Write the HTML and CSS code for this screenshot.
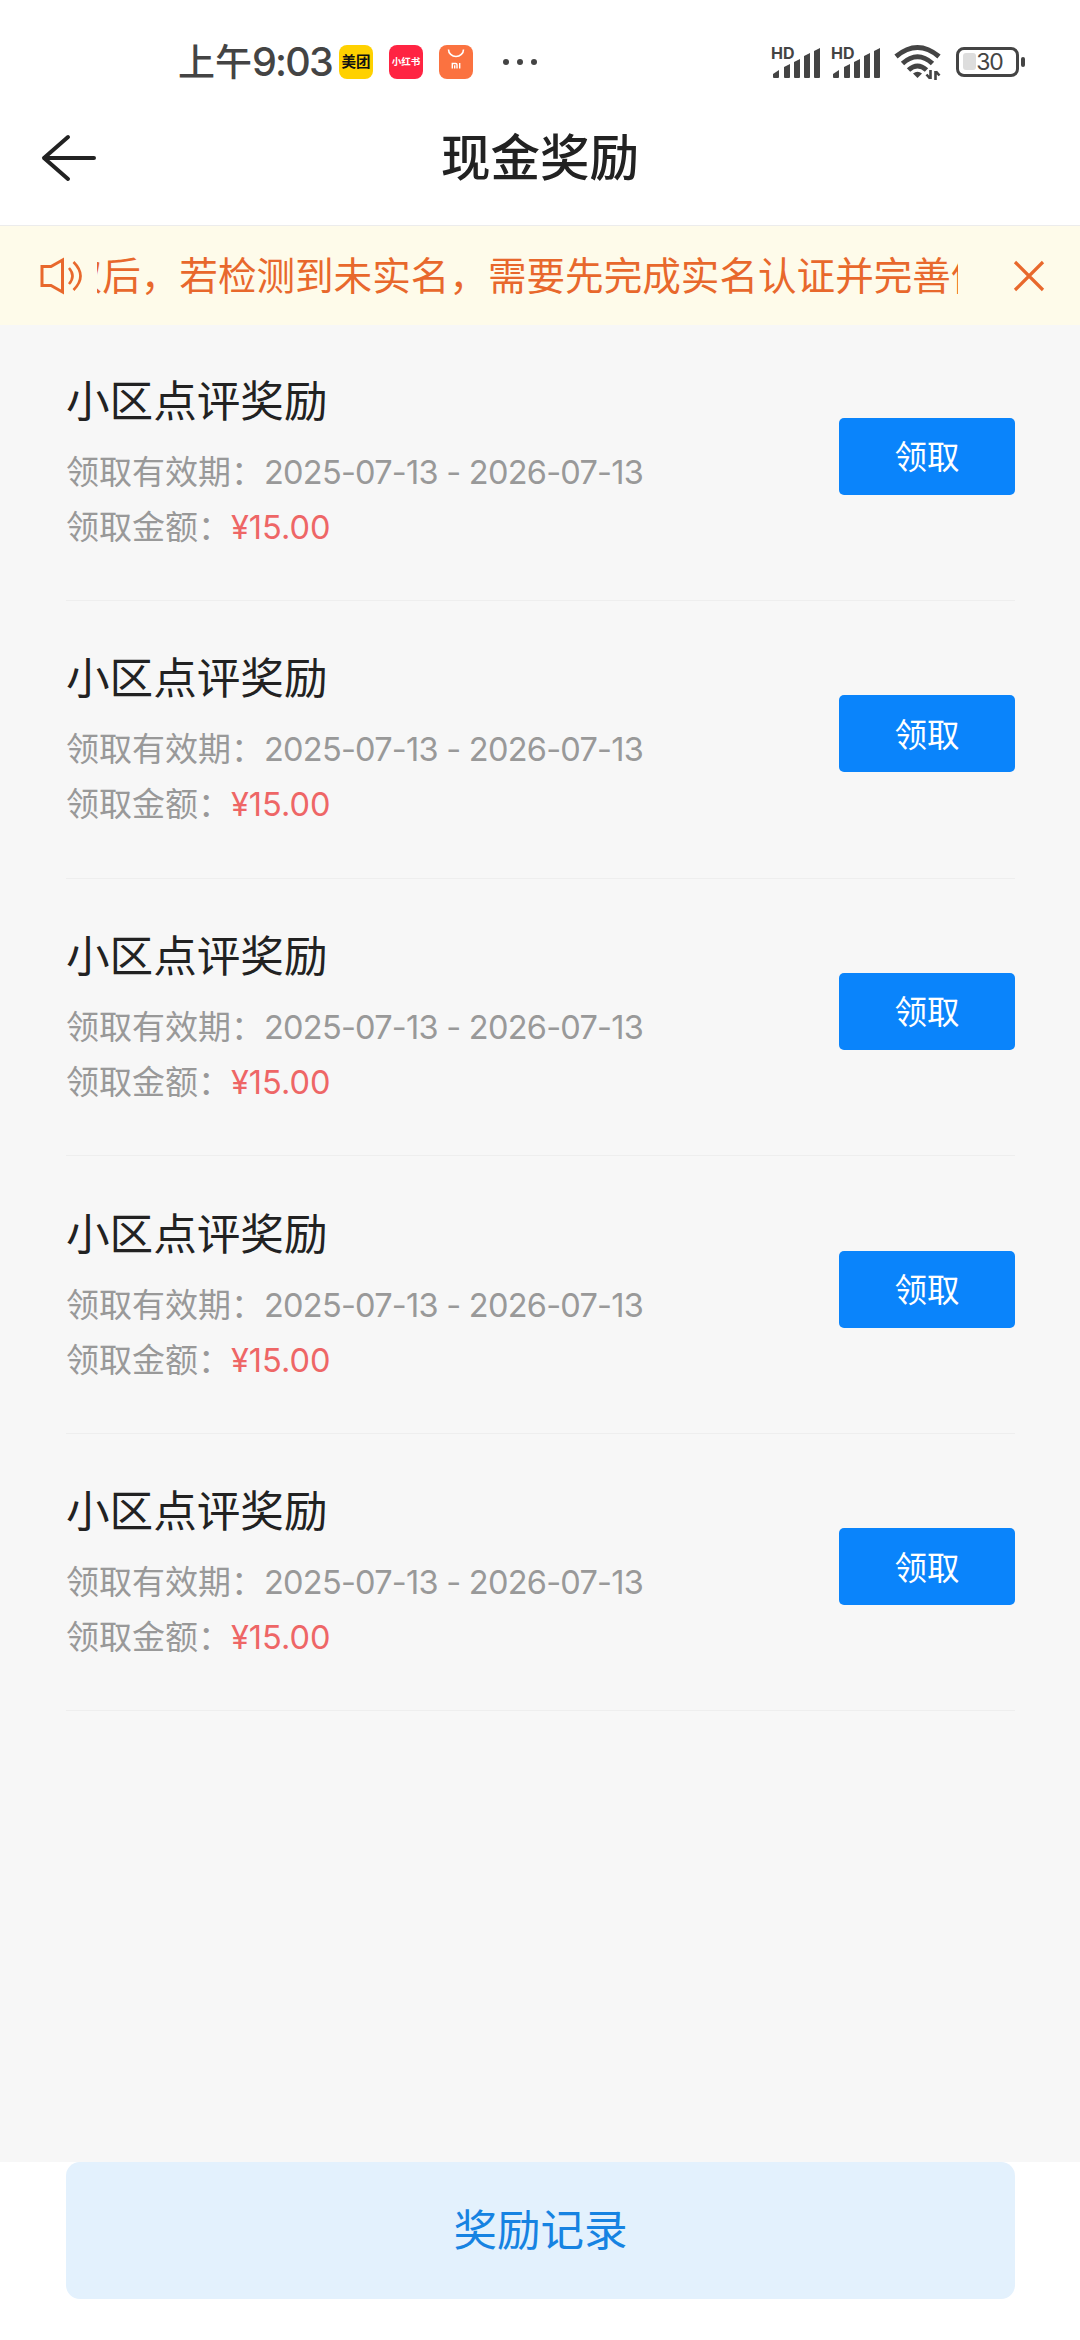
FILE: index.html
```html
<!DOCTYPE html>
<html lang="zh-CN">
<head>
  <meta charset="UTF-8">
  <title>现金奖励</title>
  <meta name="viewport" content="width=device-width, initial-scale=1.0">
  <link rel="stylesheet" href="styles.css">
</head>
<body>

<div class="page">

  <!-- Status bar -->
  <div class="status-bar">
    <div class="status-left">
      <span class="clock"><span class="clock-cn">上午</span>9:03</span>
      <span class="app app-meituan">美团</span>
      <span class="app app-red">小红书</span>
      <span class="app app-mi">
        <svg width="34" height="34" viewBox="0 0 34 34" fill="none" stroke="#fff">
          <path d="M9.5 4.5a7.5 7 0 0 0 15 0" stroke-width="1.6"/>
          <path d="M13.3 23.5v-5h3.4q1.3 0 1.3 1.3v3.7M15.7 20.3v3.2M20.7 18v5.5" stroke-width="1.4"/>
        </svg>
      </span>
      <svg class="dots" width="36" height="8" viewBox="0 0 36 8" fill="#444">
        <circle cx="4" cy="4" r="3"/><circle cx="18" cy="4" r="3"/><circle cx="32" cy="4" r="3"/>
      </svg>
    </div>
    <div class="status-right">
      <div class="signal">
        <span class="hd">HD</span>
        <svg width="50" height="36" viewBox="0 0 50 36" fill="#444">
          <path d="M1 33v-3l6-4v7q0 1-1 1H2q-1 0-1-1zM12 33V23l6-3v13q0 1-1 1h-4q-1 0-1-1zM22 33V18l6-3v18q0 1-1 1h-4q-1 0-1-1zM32 33V12l6-3v24q0 1-1 1h-4q-1 0-1-1zM42 33V7l6-3v29q0 1-1 1h-4q-1 0-1-1z"/>
        </svg>
      </div>
      <div class="signal">
        <span class="hd">HD</span>
        <svg width="50" height="36" viewBox="0 0 50 36" fill="#444">
          <path d="M1 33v-3l6-4v7q0 1-1 1H2q-1 0-1-1zM12 33V23l6-3v13q0 1-1 1h-4q-1 0-1-1zM22 33V18l6-3v18q0 1-1 1h-4q-1 0-1-1zM32 33V12l6-3v24q0 1-1 1h-4q-1 0-1-1zM42 33V7l6-3v29q0 1-1 1h-4q-1 0-1-1z"/>
        </svg>
      </div>
      <svg class="wifi" width="48" height="36" viewBox="0 0 48 36" fill="none" stroke="#444" stroke-width="5">
        <path d="M2 12.5Q23.500 -5.500 45 12.500"/>
        <path d="M8.500 19.500Q23.500 6 38.500 19.500"/>
        <path d="M14.500 26Q23.500 18 32.500 26"/>
        <path d="M19 29.500Q23.500 26 28 29.500L23.500 34z" fill="#444" stroke="none"/>
        <path d="M36.500 26v9M32.500 30.500l3.500 4M41.500 36v-9M45.500 31.500l-3.500-4" stroke-width="2.600"/>
      </svg>
      <div class="battery"><span class="battery-fill"></span><span class="battery-text">30</span></div>
      <span class="battery-cap"></span>
    </div>
  </div>

  <!-- Title bar -->
  <div class="nav">
    <svg class="back" width="56" height="48" viewBox="0 0 56 48" fill="none" stroke="#222" stroke-width="4" stroke-linecap="round" stroke-linejoin="round">
      <path d="M53 24H3M27 3L3 24l24 21"/>
    </svg>
    <h1>现金奖励</h1>
  </div>

  <!-- Notice -->
  <div class="notice">
    <svg class="horn" width="45" height="38" viewBox="0 0 45 38" fill="none" stroke="#e8682c" stroke-width="3">
      <path d="M3 9.500h9L23.500 3v32L12 28.500H3z"/>
      <path d="M30 11q7 8 0 16M34.500 5q14 14 0 28" stroke-width="2.600"/>
    </svg>
    <div class="notice-text">领取后，若检测到未实名，需要先完成实名认证并完善信息</div>
    <svg class="close" width="32" height="32" viewBox="0 0 32 32" stroke="#e8682c" stroke-width="3.200">
      <path d="M2 2l28 28M30 2L2 30"/>
    </svg>
  </div>

  <!-- Rewards -->
  <div class="list">
    <div class="reward">
      <div class="info">
        <h2>小区点评奖励</h2>
        <p>领取有效期：<span class="date">2025-07-13 - 2026-07-13</span></p>
        <p>领取金额：<span class="money">¥15.00</span></p>
      </div>
      <button class="button">领取</button>
    </div>
    <div class="reward">
      <div class="info">
        <h2>小区点评奖励</h2>
        <p>领取有效期：<span class="date">2025-07-13 - 2026-07-13</span></p>
        <p>领取金额：<span class="money">¥15.00</span></p>
      </div>
      <button class="button">领取</button>
    </div>
    <div class="reward">
      <div class="info">
        <h2>小区点评奖励</h2>
        <p>领取有效期：<span class="date">2025-07-13 - 2026-07-13</span></p>
        <p>领取金额：<span class="money">¥15.00</span></p>
      </div>
      <button class="button">领取</button>
    </div>
    <div class="reward">
      <div class="info">
        <h2>小区点评奖励</h2>
        <p>领取有效期：<span class="date">2025-07-13 - 2026-07-13</span></p>
        <p>领取金额：<span class="money">¥15.00</span></p>
      </div>
      <button class="button">领取</button>
    </div>
    <div class="reward">
      <div class="info">
        <h2>小区点评奖励</h2>
        <p>领取有效期：<span class="date">2025-07-13 - 2026-07-13</span></p>
        <p>领取金额：<span class="money">¥15.00</span></p>
      </div>
      <button class="button">领取</button>
    </div>
  </div>

  <div class="footer">
    <button class="record">奖励记录</button>
  </div>
</div>

</body>
</html>
```
FILE: styles.css
```css
* {
  box-sizing: border-box;
}

body {
  margin: 0;
  font-family: Inter, "Noto Sans CJK SC", sans-serif;
  background-color: #fff;
  color: #222;
}

.page {
  width: 1080px;
  height: 2340px;
  display: flex;
  flex-direction: column;
  overflow: hidden;
}

h1, h2, p {
  margin: 0;
  font-weight: 400;
}

button {
  border: none;
  padding: 0;
  font-family: inherit;
}

/* status bar */
.status-bar {
  height: 92px;
  padding: 32px 55px 0 178px;
  display: flex;
  justify-content: space-between;
  color: #444;
}

.status-left, .status-right {
  display: flex;
  align-items: center;
  height: 60px;
}

.clock {
  width: 161px;
  padding-top: 1px;
  font-size: 39.5px;
  font-weight: 500;
  line-height: 60px;
  letter-spacing: -1.8px;
  white-space: nowrap;
}

.clock-cn {
  font-size: 37px;
  letter-spacing: 0;
}

.app {
  width: 34px;
  height: 34px;
  margin-right: 16px;
  border-radius: 8px;
  text-align: center;
  line-height: 34px;
  font-weight: 700;
  white-space: nowrap;
}

.app-meituan {
  background-color: #ffd100;
  color: #111;
  font-size: 14.5px;
}

.app-red {
  background-color: #ff2442;
  color: #fff;
  font-size: 9.5px;
}

.app-mi {
  background-color: #fb7240;
}

.app svg {
  display: block;
}

.dots {
  margin-left: 13px;
}

.signal {
  position: relative;
  width: 60px;
  height: 36px;
}

.signal svg {
  display: block;
  margin-left: 1px;
}

.hd {
  position: absolute;
  left: 0;
  top: 1px;
  font-size: 16px;
  font-weight: 700;
  line-height: 16px;
}

.wifi {
  margin: 0 14px 0 3px;
}

.battery {
  width: 63px;
  height: 30px;
  border: 3.5px solid #444;
  border-radius: 8px;
  position: relative;
  text-align: center;
}

.battery-fill {
  position: absolute;
  left: 4px;
  top: 3px;
  width: 13px;
  height: 17px;
  border-radius: 3px;
  background-color: #ddd;
}

.battery-text {
  position: relative;
  display: block;
  padding-left: 4px;
  font-size: 23px;
  line-height: 25px;
  letter-spacing: -1px;
}

.battery-cap {
  width: 4px;
  height: 10px;
  margin-left: 2px;
  border-radius: 2px;
  background-color: #444;
}

/* title bar */
.nav {
  height: 134px;
  padding: 0 41px 2px;
  display: flex;
  align-items: center;
  border-bottom: 1px solid #ececec;
}

.nav h1 {
  flex: 1;
  margin-right: 56px;
  padding-top: 1px;
  text-align: center;
  font-size: 49.5px;
  font-weight: 500;
  line-height: 70px;
}

/* notice */
.notice {
  height: 99px;
  padding: 0 35px 0 39px;
  display: flex;
  align-items: center;
  background-color: #fefbea;
  color: #e8682c;
}

.notice-text {
  width: 861px;
  margin-left: 13px;
  overflow: hidden;
  white-space: nowrap;
  text-indent: -72px;
  font-size: 38.6px;
  line-height: 60px;
}

.close {
  margin-left: auto;
}

/* rewards */
.list {
  flex: 1;
  padding: 0 65px 0 66px;
  background-color: #f7f7f7;
}

.reward {
  height: 277.6px;
  padding-top: 48.4px;
  display: flex;
  justify-content: space-between;
  align-items: flex-start;
  border-bottom: 1.5px solid #eee;
}

.reward:first-child {
  height: 276px;
  padding-top: 46.8px;
}

.info h2 {
  font-size: 43.6px;
  line-height: 60px;
  margin-bottom: 13px;
}

.info p {
  font-size: 33px;
  line-height: 55px;
  color: #999;
  white-space: nowrap;
}

.date {
  font-size: 32.5px;
  letter-spacing: -0.75px;
}

.money {
  font-size: 32.5px;
  color: #ee6666;
}

.button {
  width: 176px;
  height: 77px;
  margin-top: 46px;
  padding-bottom: 3px;
  border-radius: 5px;
  background-color: #0a84fb;
  color: #fff;
  font-size: 32.5px;
}

.footer {
  height: 178px;
  padding: 0 65px 0 66px;
}

.record {
  display: block;
  width: 949px;
  height: 137px;
  padding-bottom: 6px;
  border-radius: 14px;
  background-color: #e3f1fd;
  color: #1683e2;
  font-size: 43.5px;
}
```
